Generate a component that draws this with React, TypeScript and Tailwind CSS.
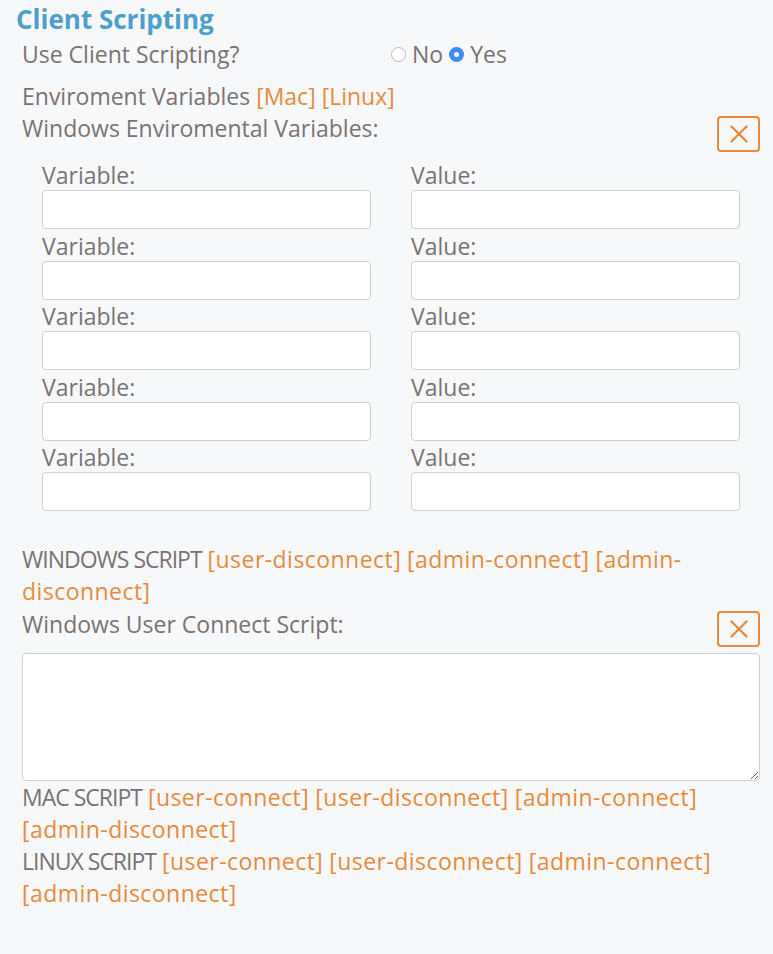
import { X } from 'lucide-react';

const font = { fontFamily: '"Open Sans", "Noto Sans", sans-serif' };

function CloseButton() {
    return (
        <button
            type="button"
            className="flex h-9 w-[43px] shrink-0 items-center justify-center rounded-[4px] border-2 border-[#e98a3c] text-[#e98a3c]"
        >
            <X size={30} strokeWidth={1.9} />
        </button>
    );
}

function Radio({ checked, label }: { checked: boolean; label: string }) {
    return (
        <label className="flex items-center gap-[6px]">
            {checked ? (
                <span className="flex h-[15px] w-[15px] items-center justify-center rounded-full bg-[#3e8af6]">
                    <span className="h-[5px] w-[5px] rounded-full bg-white" />
                </span>
            ) : (
                <span className="h-[15px] w-[15px] rounded-full border border-[#b9b9b9] bg-white" />
            )}
            <span>{label}</span>
        </label>
    );
}

function Tag({ children }: { children: string }) {
    return <span className="tracking-[0.45px] text-[#e98a3c]">{children}</span>;
}

function Caps({ children }: { children: string }) {
    return <span className="tracking-[-1px]">{children}</span>;
}

export default function App() {
    const rows = [0, 1, 2, 3, 4];

    return (
        <div
            className="min-h-[954px] w-full bg-[#f7f8fa] pr-[13px] pl-4 text-[23px] text-[#7a7373]"
            style={font}
        >
            <h1 className="h-[38px] text-[26px] leading-[38px] font-bold text-[#4d9fcf]">
                Client Scripting
            </h1>

            <div className="pl-[6px]">
                <div className="mb-[10px] grid grid-cols-2 leading-8">
                    <div>Use Client Scripting?</div>
                    <div className="flex items-center gap-[6px]">
                        <Radio checked={false} label="No" />
                        <Radio checked label="Yes" />
                    </div>
                </div>

                <div className="leading-8">
                    Enviroment Variables <span className="text-[#e98a3c]">[Mac] [Linux]</span>
                </div>

                <div className="flex items-start justify-between">
                    <div className="leading-8">Windows Enviromental Variables:</div>
                    <div className="mt-1">
                        <CloseButton />
                    </div>
                </div>

                <div className="mt-[10px] grid grid-cols-2 gap-x-10 gap-y-[3.5px] px-5">
                    {rows.map((i) => (
                        <div key={i} className="contents">
                            <div>
                                <div className="leading-[26px]">Variable:</div>
                                <input
                                    className="mt-0.5 block h-[39px] w-full rounded-[4px] border border-[#d0d0d0] bg-white px-2"
                                    type="text"
                                />
                            </div>
                            <div>
                                <div className="leading-[26px]">Value:</div>
                                <input
                                    className="mt-0.5 block h-[39px] w-full rounded-[4px] border border-[#d0d0d0] bg-white px-2"
                                    type="text"
                                />
                            </div>
                        </div>
                    ))}
                </div>

                <div className="mt-8 leading-8">
                    <Caps>WINDOWS SCRIPT</Caps> <Tag>[user-disconnect]</Tag>{' '}
                    <Tag>[admin-connect]</Tag> <Tag>[admin-</Tag>
                    <br />
                    <Tag>disconnect]</Tag>
                </div>

                <div className="mt-1 flex items-start justify-between">
                    <div className="leading-[26px]">Windows User Connect Script:</div>
                    <CloseButton />
                </div>

                <textarea className="mt-[6px] block h-[128px] w-full rounded-[4px] border border-[#d0d0d0] bg-white p-2" />

                <div className="leading-8">
                    <Caps>MAC SCRIPT</Caps> <Tag>[user-connect]</Tag> <Tag>[user-disconnect]</Tag>{' '}
                    <Tag>[admin-connect]</Tag>
                    <br />
                    <Tag>[admin-disconnect]</Tag>
                </div>

                <div className="leading-8">
                    <Caps>LINUX SCRIPT</Caps> <Tag>[user-connect]</Tag> <Tag>[user-disconnect]</Tag>{' '}
                    <Tag>[admin-connect]</Tag>
                    <br />
                    <Tag>[admin-disconnect]</Tag>
                </div>
            </div>
        </div>
    );
}
